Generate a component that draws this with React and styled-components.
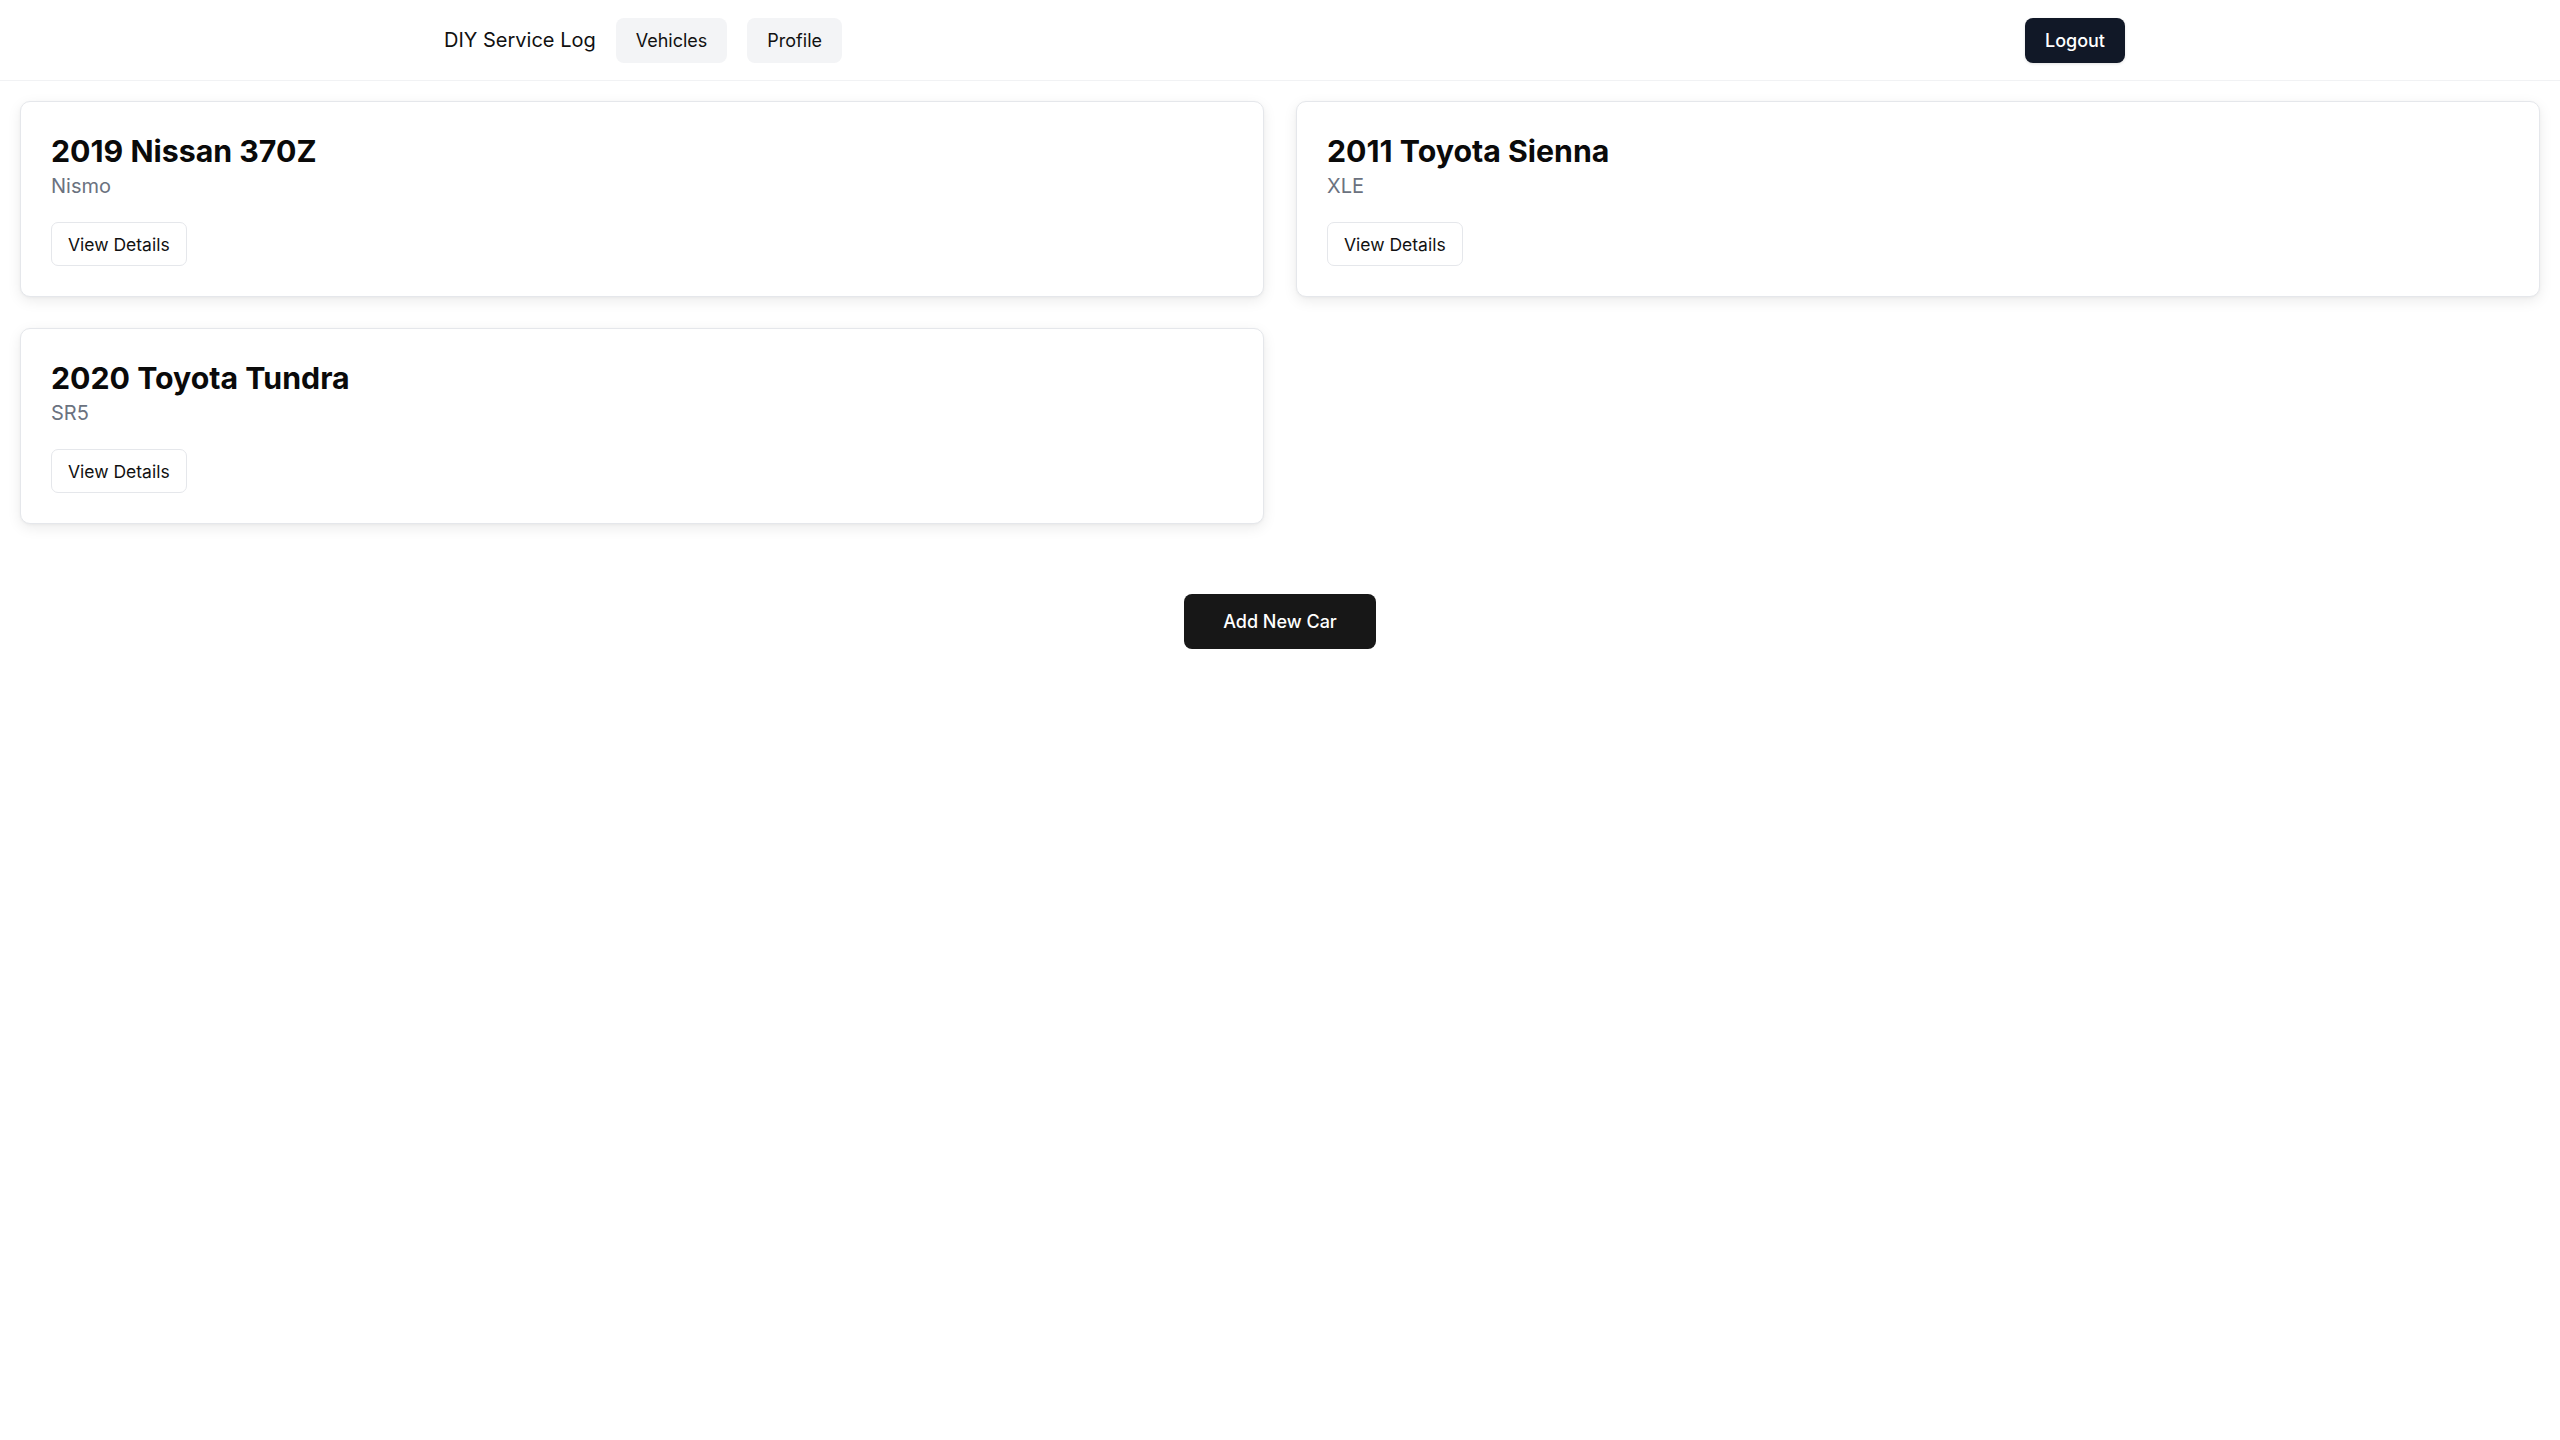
import React from "react";
import styled, { createGlobalStyle } from "styled-components";

const GlobalStyle = createGlobalStyle`
  * { box-sizing: border-box; }
  body {
    margin: 0;
    background: #ffffff;
    font-family: Inter, "Noto Sans", sans-serif;
    color: #111111;
  }
`;

const Header = styled.header`
  height: 81px;
  border-bottom: 1px solid #f1f2f4;
  display: flex;
  align-items: center;
  justify-content: space-between;
  padding: 0 435px 0 444px;
`;

const Nav = styled.nav`
  display: flex;
  align-items: center;
  gap: 20px;
`;

const Brand = styled.span`
  font-size: 20px;
  font-weight: 400;
  color: #111111;
  line-height: 28px;
`;

const NavButton = styled.button`
  font-family: inherit;
  font-size: 18px;
  line-height: 27px;
  padding: 9px 20px;
  border: none;
  border-radius: 8px;
  background: ${({ $dark }) => ($dark ? "#111827" : "#f3f4f6")};
  color: ${({ $dark }) => ($dark ? "#ffffff" : "#111111")};
  font-weight: ${({ $dark }) => ($dark ? 500 : 400)};
  box-shadow: ${({ $dark }) => ($dark ? "0 1px 3px rgba(0,0,0,0.12)" : "none")};
  cursor: pointer;
`;

const Main = styled.main`
  padding: 20px 20px;
  display: flex;
  flex-direction: column;
  align-items: center;
`;

const Grid = styled.div`
  width: 100%;
  display: grid;
  grid-template-columns: 1fr 1fr;
  gap: 31px 32px;
`;

const Card = styled.div`
  background: #ffffff;
  border: 1px solid #e5e7eb;
  border-radius: 10px;
  padding: 31px 30px 30px;
  box-shadow: 0 4px 14px rgba(0, 0, 0, 0.08), 0 1px 3px rgba(0, 0, 0, 0.04);
  display: flex;
  flex-direction: column;
  align-items: flex-start;
`;

const CarTitle = styled.h2`
  margin: 0;
  font-size: 30.3px;
  line-height: 36px;
  font-weight: 700;
  color: #0a0a0a;
`;

const Trim = styled.p`
  margin: 3px 0 0;
  font-size: 20px;
  line-height: 28px;
  color: #6b7280;
`;

const DetailsButton = styled.button`
  margin-top: 22px;
  height: 44px;
  padding: 0 16px;
  font-family: inherit;
  font-size: 17.5px;
  color: #111111;
  background: #ffffff;
  border: 1px solid #e5e7eb;
  border-radius: 7px;
  cursor: pointer;
`;

const AddButton = styled.button`
  margin-top: 70px;
  padding: 14px 39px;
  font-family: inherit;
  font-size: 18px;
  line-height: 27px;
  font-weight: 500;
  color: #ffffff;
  background: #171717;
  border: none;
  border-radius: 8px;
  cursor: pointer;
`;

const cars = [
  { id: 1, title: "2019 Nissan 370Z", trim: "Nismo" },
  { id: 2, title: "2011 Toyota Sienna", trim: "XLE" },
  { id: 3, title: "2020 Toyota Tundra", trim: "SR5" },
];

export default function App() {
  return (
    <>
      <GlobalStyle />
      <Header>
        <Nav>
          <Brand>DIY Service Log</Brand>
          <NavButton>Vehicles</NavButton>
          <NavButton>Profile</NavButton>
        </Nav>
        <NavButton $dark>Logout</NavButton>
      </Header>
      <Main>
        <Grid>
          {cars.map((car) => (
            <Card key={car.id}>
              <CarTitle>{car.title}</CarTitle>
              <Trim>{car.trim}</Trim>
              <DetailsButton>View Details</DetailsButton>
            </Card>
          ))}
        </Grid>
        <AddButton>Add New Car</AddButton>
      </Main>
    </>
  );
}
